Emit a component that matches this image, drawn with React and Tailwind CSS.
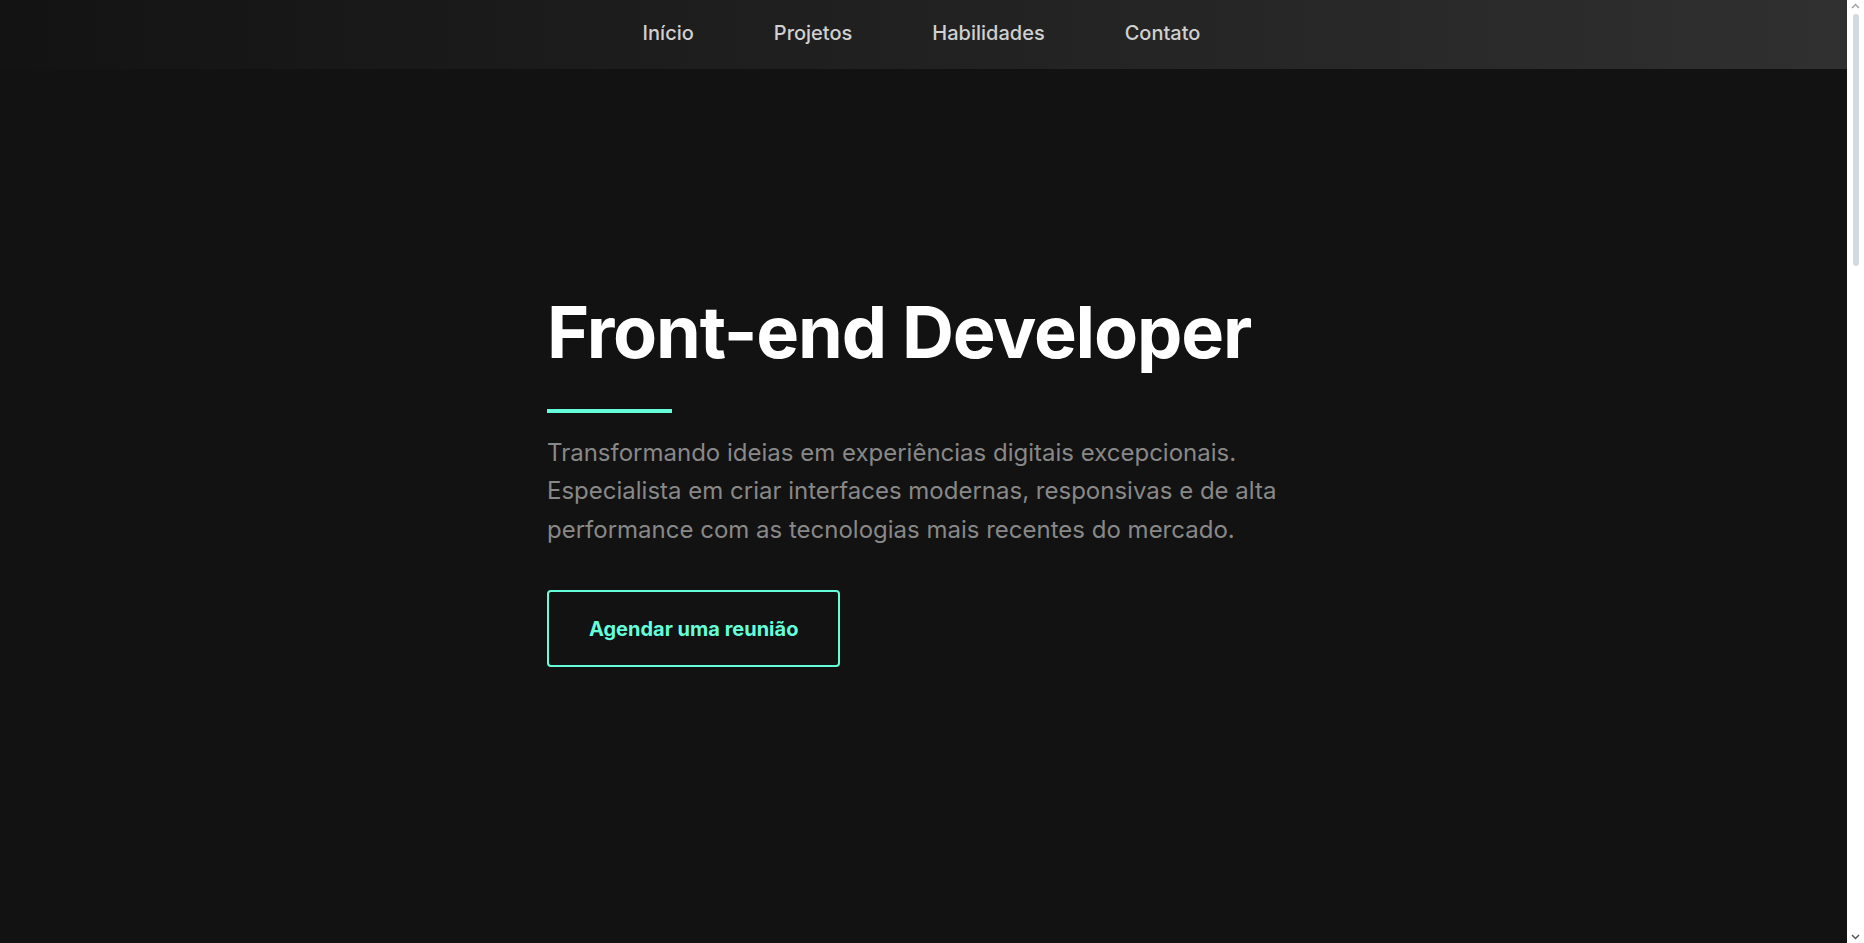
const links = ["Início", "Projetos", "Habilidades", "Contato"];

const ScrollStrip = () => (
  <div className="fixed top-0 right-0 h-screen w-[17px] bg-white">
    <svg className="absolute top-[3px] left-[4px]" width="9" height="6" viewBox="0 0 9 6">
      <path d="M1 5 L4.5 1.5 L8 5" fill="none" stroke="#a3a3a3" strokeWidth="1.5" />
    </svg>
    <div className="absolute top-[14px] left-[6px] h-[252px] w-[6px] rounded-full bg-[#d0dae2]" />
    <svg className="absolute bottom-[3px] left-[4px]" width="9" height="6" viewBox="0 0 9 6">
      <path d="M1 1 L4.5 4.5 L8 1" fill="none" stroke="#555555" strokeWidth="1.5" />
    </svg>
  </div>
);

const App = () => {
  return (
    <div className="min-h-[5900px] bg-white">
      <div className="mr-[17px] min-h-[5900px] bg-[#121212] font-['Inter','Noto_Sans',sans-serif]">
        <header className="flex h-[69px] items-center justify-center bg-gradient-to-r from-[#131313] to-[#303030] pr-1 pb-1">
          <nav className="flex items-center gap-20">
            {links.map((link) => (
              <a key={link} href="#" className="text-xl font-medium text-[#d0d0d0]">
                {link}
              </a>
            ))}
          </nav>
        </header>

        <section className="pl-[547px] pt-[227px]">
          <h1 className="text-7xl leading-none font-bold tracking-[-0.016em] text-white">Front-end Developer</h1>
          <div className="mt-[41px] h-1 w-[125px] bg-[#64ffda]" />
          <p className="mt-[21px] max-w-[745px] text-2xl leading-[1.6] text-[#888888]">
            Transformando ideias em experiências digitais excepcionais. Especialista em criar interfaces
            modernas, responsivas e de alta performance com as tecnologias mais recentes do mercado.
          </p>
          <button className="mt-[41px] rounded border-2 border-[#64ffda] px-10 py-[22.5px] text-xl leading-7 font-bold text-[#64ffda]">
            Agendar uma reunião
          </button>
        </section>
      </div>
      <ScrollStrip />
    </div>
  );
};

export default App;
